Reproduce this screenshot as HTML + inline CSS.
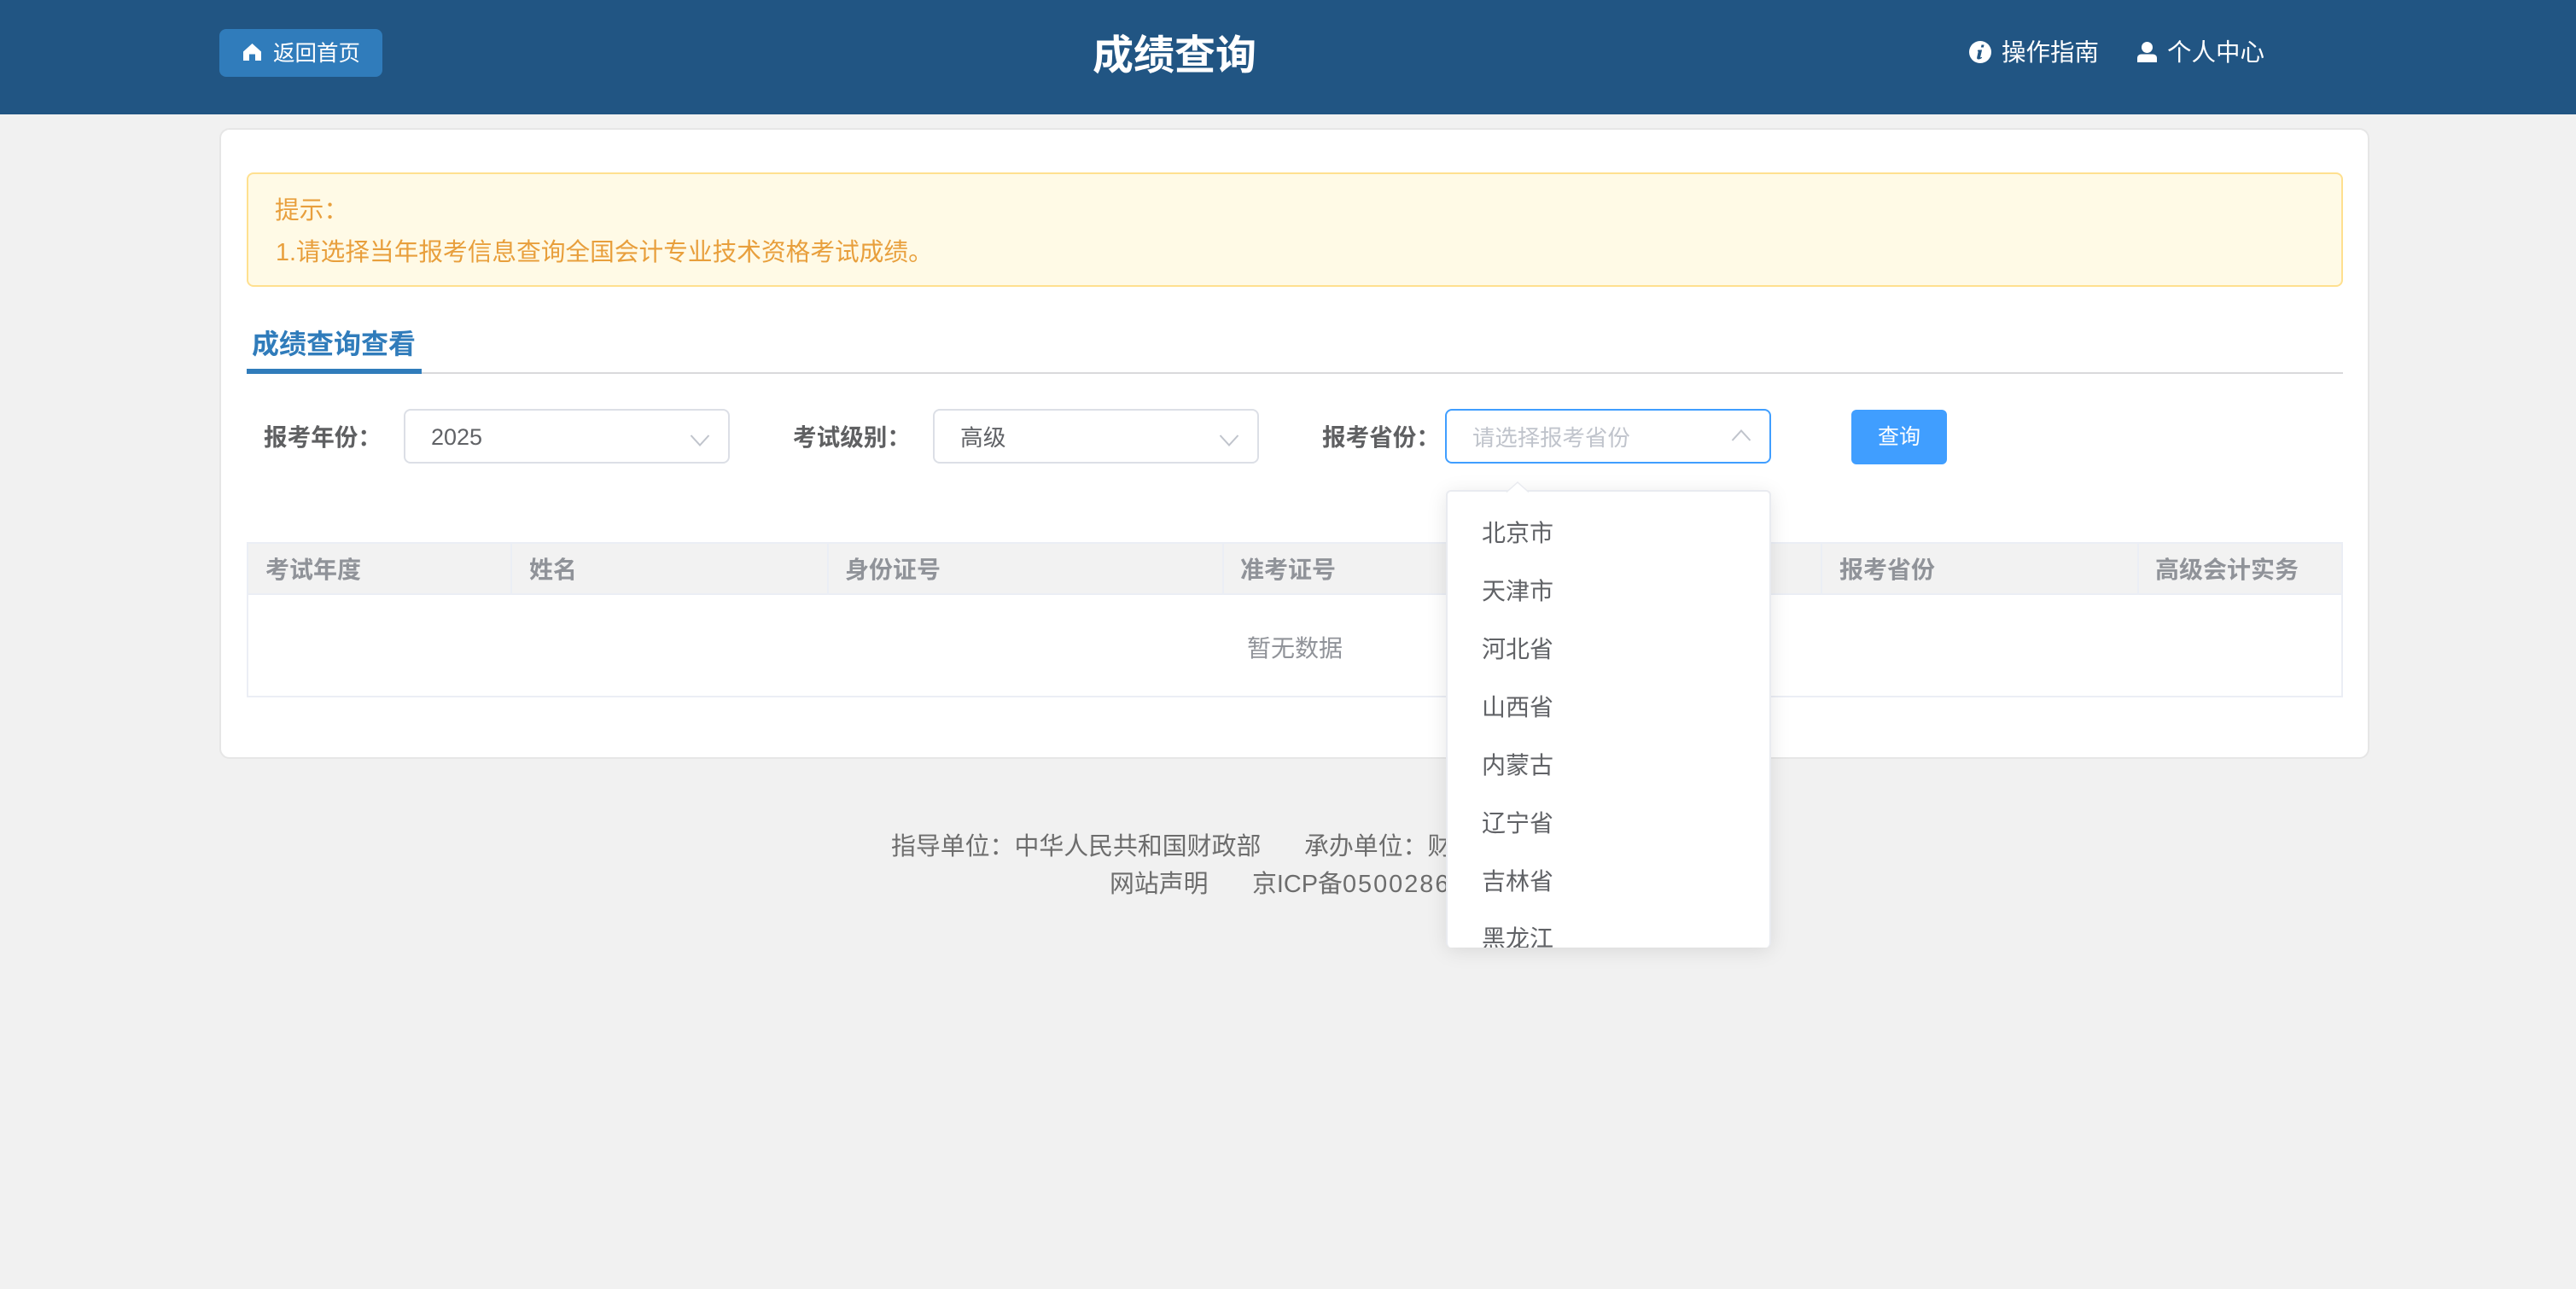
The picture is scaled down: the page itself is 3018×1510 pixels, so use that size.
<!DOCTYPE html>
<html lang="zh-CN"><head><meta charset="utf-8"><title>成绩查询</title>
<style>
*{box-sizing:border-box;margin:0;padding:0}
html,body{width:3018px;height:1510px;overflow:hidden;background:#f1f1f1}
body{position:relative;font-family:"Liberation Sans","Noto Sans CJK SC",sans-serif}
.a{position:absolute}
.t{position:absolute;white-space:nowrap;line-height:40px;height:40px}
.lbl{font-size:27.6px;font-weight:700;color:#5f6062}
.sel{position:absolute;top:479px;height:64px;width:382px;background:#fff;border:2px solid #dcdfe6;border-radius:8px}
.th{font-size:28px;font-weight:700;color:#909399;top:648px}
.sep{position:absolute;top:637px;width:2px;height:60px;background:#ebeef5}
.it{font-size:28px;color:#606266;left:1736px}
.ft{font-size:28.9px;color:#6d6d6d}
</style></head><body>

<div class="a" style="left:0;top:0;width:3018px;height:134px;background:#215583"></div>
<div class="a" style="left:257px;top:34px;width:191px;height:56px;background:#307cbb;border-radius:8px"></div>
<svg class="a" style="left:285px;top:51px" width="21" height="20" viewBox="0 0 21 20"><path fill="#fff" d="M10.5 0 21 9.5V20H14V12.5H7V20H0V9.5Z"/></svg>
<div class="t" style="left:320px;top:43px;font-size:25.5px;color:#fff">返回首页</div>
<div class="t" style="left:1280px;top:41px;width:192px;height:50px;line-height:50px;font-size:48px;font-weight:700;color:#fff;text-align:center">成绩查询</div>
<svg class="a" style="left:2307px;top:48px" width="26" height="26" viewBox="0 0 26 26"><circle cx="13" cy="13" r="13" fill="#fff"/><path fill="#215583" d="M14.500 4.500h3l-.6 3h-3zM10.500 10.500h4.600l-2 8.500c-.1.500.4.600 1.600-.2l.4 1c-1.300 1-2.700 1.700-4 1.700-1.500 0-2.200-.8-1.900-2.300l1.500-6.800-1 -.4z"/></svg>
<div class="t" style="left:2345px;top:42px;font-size:28.5px;color:#fff">操作指南</div>
<svg class="a" style="left:2504px;top:49px" width="23" height="24" viewBox="0 0 23 24"><ellipse cx="11.500" cy="6.500" rx="6.500" ry="6.500" fill="#fff"/><path fill="#fff" d="M0 24V19C0 16 2.500 14.500 5 14.500H18C20.500 14.500 23 16 23 19V24Z"/></svg>
<div class="t" style="left:2539px;top:42px;font-size:28.5px;color:#fff">个人中心</div>

<div class="a" style="left:257px;top:150px;width:2519px;height:739px;background:#fff;border:2px solid #e6e6e6;border-radius:12px"></div>
<div class="a" style="left:289px;top:202px;width:2456px;height:134px;background:#fffae6;border:2px solid #ffe08f;border-radius:8px"></div>
<div class="t" style="left:322px;top:227px;font-size:28.7px;color:#e89f3c">提示：</div>
<div class="t" style="left:323px;top:276px;font-size:28.7px;color:#e89f3c">1.请选择当年报考信息查询全国会计专业技术资格考试成绩。</div>

<div class="a" style="left:289px;top:436px;width:2456px;height:2px;background:#d9d9dc"></div>
<div class="a" style="left:289px;top:432px;width:205px;height:6px;background:#307cbb"></div>
<div class="t" style="left:295px;top:383px;font-size:32px;font-weight:700;color:#307cbb">成绩查询查看</div>

<div class="t lbl" style="left:309px;top:493px">报考年份：</div>
<div class="sel" style="left:473px"></div>
<div class="t" style="left:505px;top:492px;font-size:27px;color:#606266">2025</div>
<svg class="a" style="left:808px;top:509px" width="24" height="14" viewBox="0 0 24 14"><path d="M1.500 1 12 12.500 22.500 1" fill="none" stroke="#c0c4cc" stroke-width="2"/></svg>

<div class="t lbl" style="left:929px;top:493px">考试级别：</div>
<div class="sel" style="left:1093px"></div>
<div class="t" style="left:1125px;top:493px;font-size:26.8px;color:#606266">高级</div>
<svg class="a" style="left:1428px;top:509px" width="24" height="14" viewBox="0 0 24 14"><path d="M1.500 1 12 12.500 22.500 1" fill="none" stroke="#c0c4cc" stroke-width="2"/></svg>

<div class="t lbl" style="left:1549px;top:493px">报考省份：</div>
<div class="sel" style="left:1693px;border-color:#409eff"></div>
<div class="t" style="left:1725px;top:493px;font-size:26.4px;color:#c0c4cc">请选择报考省份</div>
<svg class="a" style="left:2028px;top:503px" width="24" height="14" viewBox="0 0 24 14"><path d="M1.500 13 12 1.500 22.500 13" fill="none" stroke="#c0c4cc" stroke-width="2"/></svg>

<div class="a" style="left:2169px;top:480px;width:112px;height:64px;background:#409eff;border-radius:6px"></div>
<div class="t" style="left:2169px;top:492px;width:112px;text-align:center;font-size:25px;color:#fff">查询</div>

<div class="a" style="left:289px;top:635px;width:2456px;height:182px;background:#fff;border:2px solid #ebeef5"></div>
<div class="a" style="left:291px;top:637px;width:2452px;height:60px;background:#f2f2f2;border-bottom:2px solid #ebeef5"></div>
<div class="sep" style="left:598px"></div>
<div class="sep" style="left:969px"></div>
<div class="sep" style="left:1432px"></div>
<div class="sep" style="left:2133px"></div>
<div class="sep" style="left:2504px"></div>
<div class="t th" style="left:311px">考试年度</div>
<div class="t th" style="left:620px">姓名</div>
<div class="t th" style="left:990px">身份证号</div>
<div class="t th" style="left:1453px">准考证号</div>
<div class="t th" style="left:2155px">报考省份</div>
<div class="t th" style="left:2525px">高级会计实务</div>
<div class="t" style="left:1461px;top:740px;font-size:28px;color:#909399">暂无数据</div>

<div class="t ft" style="left:1044px;top:972px">指导单位：中华人民共和国财政部</div>
<div class="t ft" style="left:1528px;top:972px">承办单位：财政部会计财务评价中心</div>
<div class="t ft" style="left:1300px;top:1016px">网站声明</div>
<div class="t ft" style="left:1467px;top:1016px">京ICP备<span style="letter-spacing:2px">05002860</span>号</div>

<div class="a" style="left:1694px;top:574px;width:381px;height:536px;background:#fff;border:2px solid #e9ebf0;border-bottom:0;border-radius:6px;box-shadow:0 4px 24px rgba(0,0,0,.1);overflow:hidden"></div>
<svg class="a" style="left:1764px;top:564px" width="28" height="13" viewBox="0 0 28 13"><path d="M1 12.500 14 1 27 12.500" fill="#fff" stroke="#e9ebf0" stroke-width="1.500"/><path d="M1 13h26v2H1z" fill="#fff"/></svg>
<div class="t it" style="top:605px">北京市</div>
<div class="t it" style="top:673px">天津市</div>
<div class="t it" style="top:741px">河北省</div>
<div class="t it" style="top:809px">山西省</div>
<div class="t it" style="top:877px">内蒙古</div>
<div class="t it" style="top:945px">辽宁省</div>
<div class="t it" style="top:1013px">吉林省</div>
<div class="a" style="left:1696px;top:1080px;width:377px;height:30px;overflow:hidden;border-radius:0 0 6px 6px"><div class="t it" style="left:40px;top:0">黑龙江</div></div>
</body></html>
